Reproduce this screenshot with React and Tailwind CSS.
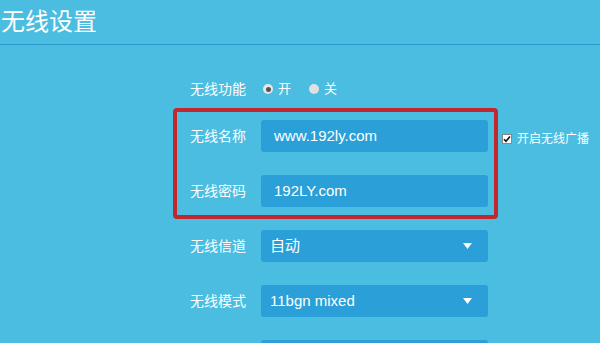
import React from 'react';

const cjk = { fontFamily: '"Liberation Sans", "Noto Sans CJK SC", sans-serif' };

const Label = ({ children }) => (
  <div className="w-[69px] text-right text-[14px] text-white leading-none">{children}</div>
);

const TextField = ({ value }) => (
  <div className="ml-[15px] w-[227px] h-[32px] rounded-[3px] bg-[#2a9fd8] flex items-center pl-[13px] text-[15px] text-white">
    {value}
  </div>
);

const SelectField = ({ value }) => (
  <div className="ml-[15px] w-[227px] h-[32px] rounded-[3px] bg-[#2a9fd8] flex items-center justify-between pl-[9px] pr-[16px] text-[15px] text-white">
    <span>{value}</span>
    <svg width="9" height="6" viewBox="0 0 9 6">
      <path d="M0 0h9L4.5 6z" fill="#ffffff" />
    </svg>
  </div>
);

const App = () => {
  return (
    <div className="w-[600px] h-[343px] overflow-hidden bg-[#4abde1]" style={cjk}>
      {/* Header */}
      <div className="h-[45px] border-b border-[#2a98cb] flex items-center pl-[1px]">
        <h1 className="text-[24px] text-white leading-none">无线设置</h1>
      </div>

      <div className="pl-[173px]">
        {/* Wireless on/off */}
        <div className="mt-[34px] h-[20px] pl-[4px] flex items-center">
          <Label>无线功能</Label>
          <div className="ml-[17px] flex items-center text-[13px] text-white">
            <span className="w-[10px] h-[10px] rounded-full bg-[#e6e6e6] flex items-center justify-center">
              <span className="w-[5px] h-[5px] rounded-full bg-[#555]" />
            </span>
            <span className="ml-[5px]">开</span>
            <span className="ml-[18px] w-[10px] h-[10px] rounded-full bg-[#e0e0e0]" />
            <span className="ml-[5px]">关</span>
          </div>
        </div>

        {/* Highlighted name/password */}
        <div className="mt-[9px] flex items-start">
          <div className="w-[325px] border-4 border-[#c1272d] rounded-[4px] pt-[8px] pb-[8px] flex flex-col gap-[23px]">
            <div className="flex items-center">
              <Label>无线名称</Label>
              <TextField value="www.192ly.com" />
            </div>
            <div className="flex items-center">
              <Label>无线密码</Label>
              <TextField value="192LY.com" />
            </div>
          </div>
          <div className="ml-[4px] mt-[22px] flex items-center text-[12px] text-white">
            <span className="w-[10px] h-[10px] bg-white border border-[#888] flex items-center justify-center">
              <svg width="8" height="8" viewBox="0 0 8 8">
                <path d="M1 4.2l2 2L7 1.5" stroke="#111" strokeWidth="1.6" fill="none" />
              </svg>
            </span>
            <span className="ml-[5px]">开启无线广播</span>
          </div>
        </div>

        {/* Selects */}
        <div className="mt-[11px] pl-[4px] flex flex-col gap-[23px]">
          <div className="flex items-center">
            <Label>无线信道</Label>
            <SelectField value="自动" />
          </div>
          <div className="flex items-center">
            <Label>无线模式</Label>
            <SelectField value="11bgn mixed" />
          </div>
          {/* next row, only its top edge is in view */}
          <div className="flex items-center">
            <div className="w-[69px]" />
            <div className="ml-[15px] w-[227px] h-[32px] rounded-[3px] bg-[#2a9fd8]" />
          </div>
        </div>
      </div>
    </div>
  );
};

export default App;
